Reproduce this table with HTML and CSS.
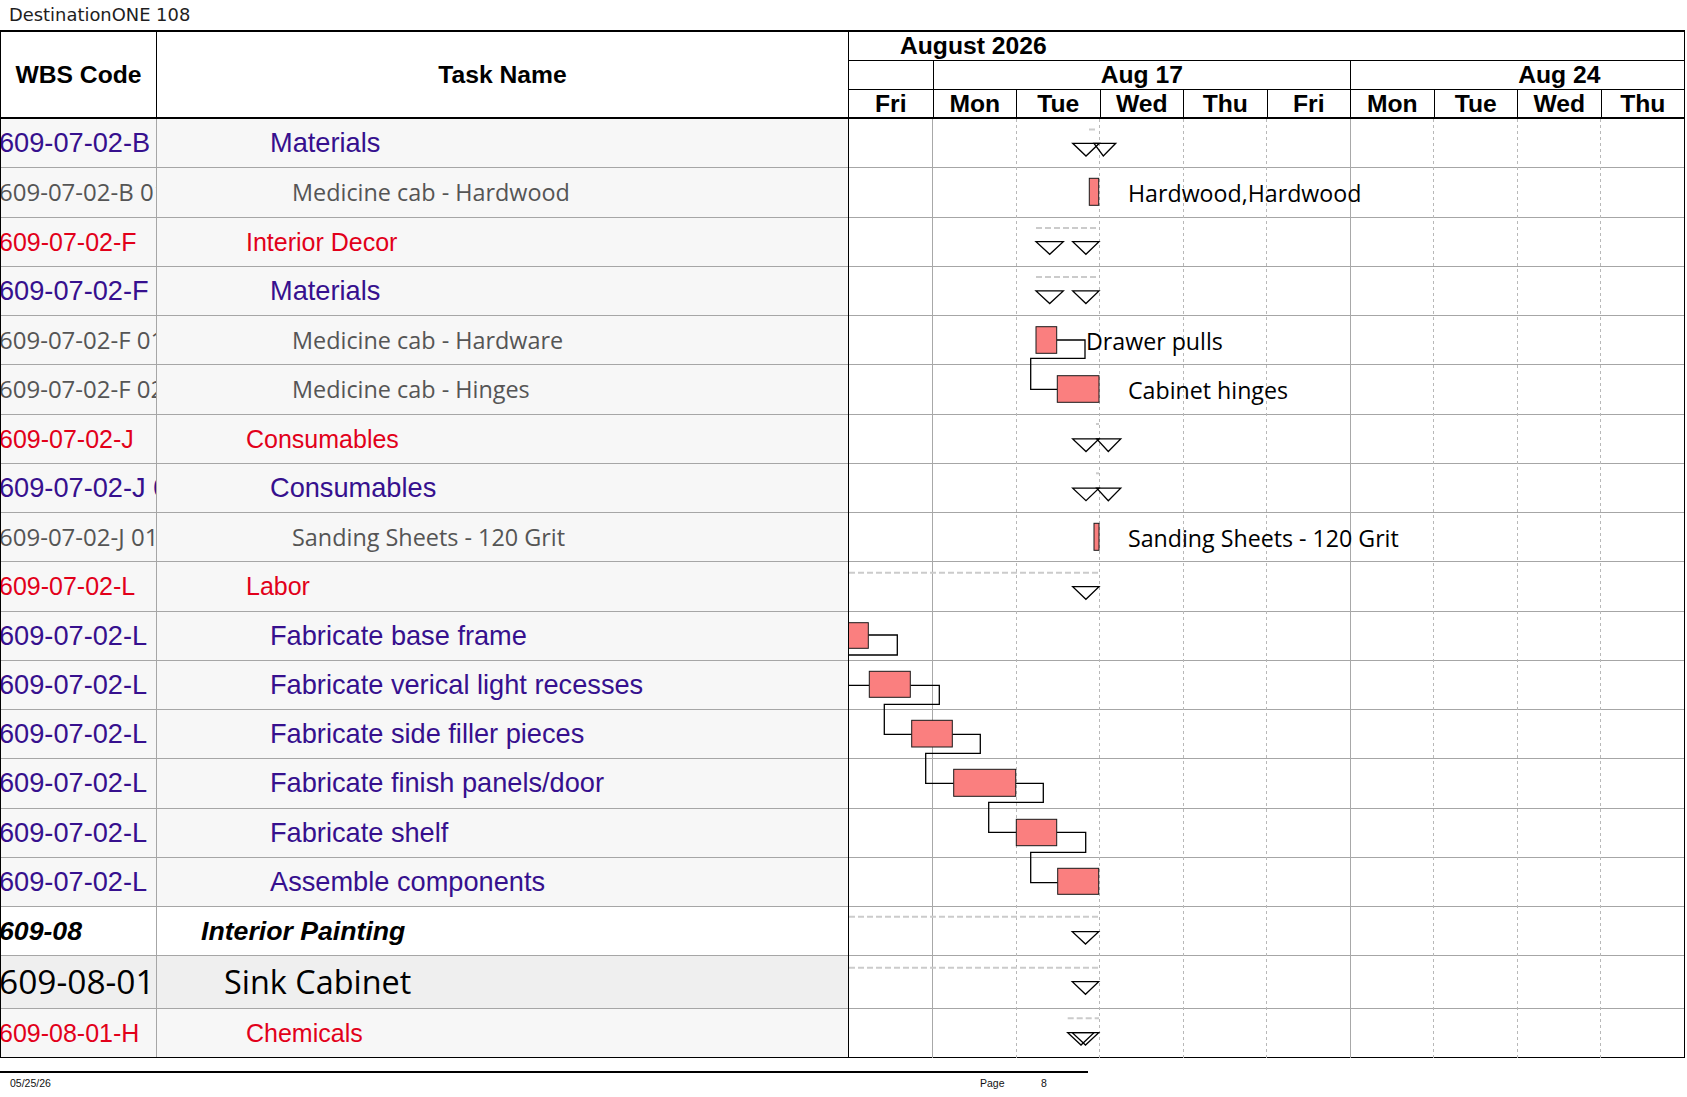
FILE: index.html
```html
<!DOCTYPE html>
<html lang="en">
<head>
<meta charset="utf-8">
<title>DestinationONE 108</title>
<link rel="stylesheet" href="styles.css">
</head>
<body>
<div class="title">DestinationONE 108</div>
<div class="sheet">
  <div class="table">
    <div class="thead">
      <div class="th th-wbs">WBS Code</div>
      <div class="th th-task">Task Name</div>
    </div>
    <div class="row c-purple"><div class="wbs">609-07-02-B</div><div class="task i4">Materials</div></div>
    <div class="row c-gray"><div class="wbs">609-07-02-B 01</div><div class="task i5">Medicine cab - Hardwood</div></div>
    <div class="row c-red"><div class="wbs">609-07-02-F</div><div class="task i3">Interior Decor</div></div>
    <div class="row c-purple"><div class="wbs">609-07-02-F</div><div class="task i4">Materials</div></div>
    <div class="row c-gray"><div class="wbs">609-07-02-F 01</div><div class="task i5">Medicine cab - Hardware</div></div>
    <div class="row c-gray"><div class="wbs">609-07-02-F 02</div><div class="task i5">Medicine cab - Hinges</div></div>
    <div class="row c-red"><div class="wbs">609-07-02-J</div><div class="task i3">Consumables</div></div>
    <div class="row c-purple"><div class="wbs">609-07-02-J 01</div><div class="task i4">Consumables</div></div>
    <div class="row c-gray"><div class="wbs">609-07-02-J 0101</div><div class="task i5">Sanding Sheets - 120 Grit</div></div>
    <div class="row c-red"><div class="wbs">609-07-02-L</div><div class="task i3">Labor</div></div>
    <div class="row c-purple"><div class="wbs">609-07-02-L</div><div class="task i4">Fabricate base frame</div></div>
    <div class="row c-purple"><div class="wbs">609-07-02-L</div><div class="task i4">Fabricate verical light recesses</div></div>
    <div class="row c-purple"><div class="wbs">609-07-02-L</div><div class="task i4">Fabricate side filler pieces</div></div>
    <div class="row c-purple"><div class="wbs">609-07-02-L</div><div class="task i4">Fabricate finish panels/door</div></div>
    <div class="row c-purple"><div class="wbs">609-07-02-L</div><div class="task i4">Fabricate shelf</div></div>
    <div class="row c-purple"><div class="wbs">609-07-02-L</div><div class="task i4">Assemble components</div></div>
    <div class="row c-phase"><div class="wbs">609-08</div><div class="task i1">Interior Painting</div></div>
    <div class="row big c-sub"><div class="wbs">609-08-01</div><div class="task i2">Sink Cabinet</div></div>
    <div class="row last c-red"><div class="wbs">609-08-01-H</div><div class="task i3">Chemicals</div></div>
  </div>

  <div class="gantt">
    <div class="ghead">
      <div class="month">August 2026</div>
      <div class="weeks">
        <div class="wk"></div>
        <div class="wk sep">Aug 17</div>
        <div class="wk sep">Aug 24</div>
      </div>
      <div class="days">
        <div class="day">Fri</div>
        <div class="day sep">Mon</div>
        <div class="day sep">Tue</div>
        <div class="day sep">Wed</div>
        <div class="day sep">Thu</div>
        <div class="day sep">Fri</div>
        <div class="day sep">Mon</div>
        <div class="day sep">Tue</div>
        <div class="day sep">Wed</div>
        <div class="day sep">Thu</div>
      </div>
    </div>
    <div class="gbody">
      <div class="grow"></div><div class="grow"></div><div class="grow"></div><div class="grow"></div>
      <div class="grow"></div><div class="grow"></div><div class="grow"></div><div class="grow"></div>
      <div class="grow"></div><div class="grow"></div><div class="grow"></div><div class="grow"></div>
      <div class="grow"></div><div class="grow"></div><div class="grow"></div><div class="grow"></div>
      <div class="grow"></div>
      <div class="grow big"></div>
      <div class="grow last"></div>

      <svg class="canvas" width="835" height="939" viewBox="0 0 835 939" xmlns="http://www.w3.org/2000/svg">
        <!-- day grid -->
        <line class="gl-wk" x1="83.5" y1="0" x2="83.5" y2="939"/>
        <line class="gl-dy" x1="167.5" y1="0" x2="167.5" y2="939"/>
        <line class="gl-dy" x1="250.5" y1="0" x2="250.5" y2="939"/>
        <line class="gl-dy" x1="334.5" y1="0" x2="334.5" y2="939"/>
        <line class="gl-dy" x1="417.5" y1="0" x2="417.5" y2="939"/>
        <line class="gl-wk" x1="501.5" y1="0" x2="501.5" y2="939"/>
        <line class="gl-dy" x1="584.5" y1="0" x2="584.5" y2="939"/>
        <line class="gl-dy" x1="668.5" y1="0" x2="668.5" y2="939"/>
        <line class="gl-dy" x1="751.5" y1="0" x2="751.5" y2="939"/>

        <!-- summary rollup lines -->
        <line class="sum" x1="240" y1="10.5" x2="248" y2="10.5"/>
        <line class="sum" x1="187" y1="109" x2="250" y2="109"/>
        <line class="sum" x1="187" y1="158" x2="250" y2="158"/>
        <line class="sum" x1="247" y1="305" x2="250" y2="305"/>
        <line class="sum" x1="247" y1="354.3" x2="250" y2="354.3"/>
        <line class="sum" x1="0" y1="453.7" x2="250" y2="453.7"/>
        <line class="sum" x1="0" y1="797.7" x2="250" y2="797.7"/>
        <line class="sum" x1="0" y1="848.7" x2="250" y2="848.7"/>
        <line class="sum" x1="218.7" y1="899.3" x2="250" y2="899.3"/>

        <!-- summary triangles -->
        <polygon class="tri" points="223.7,24.3 250.3,24.3 237,37"/>
        <polygon class="tri" points="245,24.3 266.7,24.3 254.3,37"/>
        <polygon class="tri" points="187,122.7 214.3,122.7 200.7,135.3"/>
        <polygon class="tri" points="223.7,122.7 250,122.7 236.9,135.3"/>
        <polygon class="tri" points="187,171.9 214.3,171.9 200.7,184.5"/>
        <polygon class="tri" points="223.7,171.9 250,171.9 236.9,184.5"/>
        <polygon class="tri" points="223.7,319.9 250,319.9 237,332.5"/>
        <polygon class="tri" points="247.7,319.9 271.7,319.9 259.3,332.5"/>
        <polygon class="tri" points="223.7,369.1 250,369.1 237,381.7"/>
        <polygon class="tri" points="247.7,369.1 271.7,369.1 259.3,381.7"/>
        <polygon class="tri" points="223.7,467.7 250,467.7 236.9,480.3"/>
        <polygon class="tri" points="223.3,812.7 249.7,812.7 236.5,825"/>
        <polygon class="tri" points="223.3,862.7 249.7,862.7 236.5,875.3"/>
        <polygon class="tri" points="218.7,913.7 245,913.7 232,926"/>
        <polygon class="tri" points="223.3,913.7 249.7,913.7 236.5,926"/>

        <!-- links -->
        <polyline class="lnk" points="207.7,221 236,221 236,239.3 181.7,239.3 181.7,270.3 208.3,270.3"/>
        <polyline class="lnk" points="19.3,516 48.3,516 48.3,536 -5,536 -5,566.3 20.3,566.3"/>
        <polyline class="lnk" points="61.3,566.3 90.3,566.3 90.3,585.3 35.3,585.3 35.3,615.3 62.7,615.3"/>
        <polyline class="lnk" points="103.3,615.3 131.3,615.3 131.3,634.3 76.7,634.3 76.7,664.3 104.7,664.3"/>
        <polyline class="lnk" points="166.7,664.3 194.3,664.3 194.3,683.3 139.7,683.3 139.7,713.3 167.3,713.3"/>
        <polyline class="lnk" points="207.7,713.3 236.7,713.3 236.7,733.3 181.7,733.3 181.7,763.7 208.7,763.7"/>

        <!-- task bars -->
        <rect class="bar" x="240.3" y="59.3" width="9.4" height="27"/>
        <rect class="bar" x="187" y="207.7" width="20.7" height="26.6"/>
        <rect class="bar" x="208.3" y="256.7" width="41.7" height="26.6"/>
        <rect class="bar" x="245" y="404.3" width="5" height="27"/>
        <rect class="bar" x="-2" y="503.7" width="21.3" height="25.6"/>
        <rect class="bar" x="20.3" y="552.3" width="41" height="26"/>
        <rect class="bar" x="62.7" y="601.3" width="40.6" height="26.7"/>
        <rect class="bar" x="104.7" y="650.3" width="62" height="27"/>
        <rect class="bar" x="167.3" y="700.3" width="40.4" height="26.4"/>
        <rect class="bar" x="208.7" y="749.3" width="41" height="26"/>

        <!-- bar labels -->
        <text class="lbl" x="279" y="82.8">Hardwood,Hardwood</text>
        <text class="lbl" x="237" y="230.5">Drawer pulls</text>
        <text class="lbl" x="279" y="279.8">Cabinet hinges</text>
        <text class="lbl" x="279" y="427.6">Sanding Sheets - 120 Grit</text>
      </svg>
    </div>
  </div>
</div>
<div class="footer">
  <div class="foot-row">
    <span class="f-date">05/25/26</span>
    <span class="f-page">Page</span>
    <span class="f-num">8</span>
  </div>
</div>
</body>
</html>
```

FILE: styles.css
```css
* {
  box-sizing: border-box;
}

html, body {
  margin: 0;
  padding: 0;
  background: #ffffff;
}

body {
  width: 1687px;
  height: 1097px;
  overflow: hidden;
  font-family: "Liberation Sans", Arial, sans-serif;
  color: #000;
}

.title {
  height: 30px;
  padding-left: 9px;
  padding-top: 1px;
  font-family: "DejaVu Sans", sans-serif;
  font-size: 17.9px;
  line-height: 27px;
  color: #1e1e1e;
  white-space: nowrap;
}

.sheet {
  display: flex;
  width: 1685px;
  border-top: 2px solid #000;
  border-bottom: 1px solid #000;
}

/* ---------- left table ---------- */
.table {
  width: 848px;
  border-left: 1px solid #000;
}

.thead {
  display: flex;
  height: 87px;
  border-bottom: 2px solid #000;
  background: #fff;
}

.th {
  display: flex;
  align-items: center;
  justify-content: center;
  font-weight: bold;
  font-size: 24.67px;
}

.th-wbs {
  width: 156px;
  border-right: 1px solid #000;
}

.th-task {
  flex: 1;
}

.row {
  display: flex;
  height: 49.26px;
  line-height: 48.26px;
  border-bottom: 1px solid #a6a6a6;
  background: #f7f7f7;
  font-size: 27.2px;
  white-space: nowrap;
}

.row.big {
  height: 52.6px;
  line-height: 51.6px;
  background: #efefef;
}

.row.last {
  height: 48.3px;
  line-height: 48.3px;
  border-bottom: 0;
}

.wbs {
  width: 156px;
  flex: none;
  border-right: 1px solid #a6a6a6;
  overflow: hidden;
  text-indent: -2px;
}

.task {
  flex: 1;
  overflow: hidden;
}

.i1 { padding-left: 44px; }
.i2 { padding-left: 67px; }
.i3 { padding-left: 89px; }
.i4 { padding-left: 113px; }
.i5 { padding-left: 135px; }

.c-purple { color: #36108e; }

.c-red {
  color: #e2001a;
  font-size: 25px;
}

.c-gray {
  color: #555555;
  font-family: "Open Sans", "Liberation Sans", sans-serif;
  font-size: 23.4px;
}

.c-gray .wbs {
  font-size: 24px;
}

.c-phase {
  background: #ffffff;
  font-weight: bold;
  font-style: italic;
  font-size: 26.67px;
  color: #000;
}

.c-sub {
  color: #000;
  font-family: "Open Sans", "Liberation Sans", sans-serif;
  font-size: 32.4px;
}

.c-sub .wbs {
  font-size: 33.5px;
}

/* ---------- gantt ---------- */
.gantt {
  width: 837px;
  border-left: 1px solid #000;
  border-right: 1px solid #000;
}

.ghead {
  border-bottom: 2px solid #000;
  font-weight: bold;
  font-size: 24.67px;
  white-space: nowrap;
}

.month {
  height: 29px;
  line-height: 28px;
  padding-left: 51px;
  border-bottom: 1px solid #000;
}

.weeks {
  display: grid;
  grid-template-columns: 83.5px 417.5px 417.5px;
  height: 29px;
  line-height: 28px;
  border-bottom: 1px solid #000;
  overflow: hidden;
}

.wk {
  text-align: center;
}

.days {
  display: grid;
  grid-template-columns: repeat(10, 1fr);
  height: 27px;
  line-height: 27px;
}

.day {
  text-align: center;
}

.sep {
  border-left: 1px solid #000;
}

.gbody {
  position: relative;
  background: #fff;
}

.grow {
  height: 49.26px;
  border-bottom: 1px solid #a6a6a6;
}

.grow.big {
  height: 52.6px;
}

.grow.last {
  height: 48.3px;
  border-bottom: 0;
}

.canvas {
  position: absolute;
  left: 0;
  top: 0;
  overflow: hidden;
}

.gl-wk {
  stroke: #a8a8a8;
  stroke-width: 1;
}

.gl-dy {
  stroke: #b8b8b8;
  stroke-width: 1;
  stroke-dasharray: 3 3;
}

.sum {
  stroke: #cbcbcb;
  stroke-width: 2;
  stroke-dasharray: 6 3;
}

.tri {
  fill: none;
  stroke: #000;
  stroke-width: 1.3;
}

.lnk {
  fill: none;
  stroke: #000;
  stroke-width: 1.3;
}

.bar {
  fill: #fa7f7f;
  stroke: #1a1a1a;
  stroke-width: 1;
}

.lbl {
  font-family: "Open Sans", "Liberation Sans", sans-serif;
  font-size: 23.2px;
  fill: #000;
}

/* ---------- footer ---------- */
.footer {
  width: 1088px;
  margin-top: 13px;
  border-top: 2px solid #000;
}

.foot-row {
  display: flex;
  padding-top: 4px;
  font-size: 10.5px;
  line-height: 12px;
  color: #111;
  white-space: nowrap;
}

.f-date {
  width: 980px;
  padding-left: 10px;
}

.f-page {
  width: 61px;
}
```
